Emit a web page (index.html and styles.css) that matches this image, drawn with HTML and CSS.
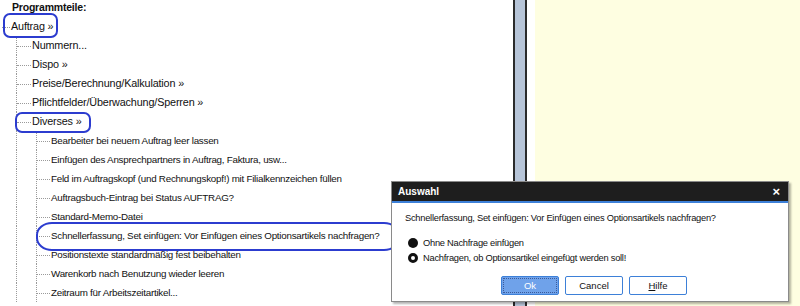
FILE: index.html
```html
<!DOCTYPE html>
<html lang="de">
<head>
  <meta charset="UTF-8">
  <title>Programmteile</title>
  <link rel="stylesheet" href="styles.css">
</head>
<body>
  <div class="window">
    <div class="tree-pane">
      <ul class="tree">
        <li class="head">Programmteile:</li>
        <li class="lvl0">Auftrag »</li>
        <li class="lvl1">Nummern...</li>
        <li class="lvl1">Dispo »</li>
        <li class="lvl1">Preise/Berechnung/Kalkulation »</li>
        <li class="lvl1">Pflichtfelder/Überwachung/Sperren »</li>
        <li class="lvl1">Diverses »</li>
        <li class="lvl2">Bearbeiter bei neuem Auftrag leer lassen</li>
        <li class="lvl2">Einfügen des Ansprechpartners in Auftrag, Faktura, usw...</li>
        <li class="lvl2">Feld im Auftragskopf (und Rechnungskopf!) mit Filialkennzeichen füllen</li>
        <li class="lvl2">Auftragsbuch-Eintrag bei Status AUFTRAG?</li>
        <li class="lvl2">Standard-Memo-Datei</li>
        <li class="lvl2">Schnellerfassung, Set einfügen: Vor Einfügen eines Optionsartikels nachfragen?</li>
        <li class="lvl2">Positionstexte standardmäßig fest beibehalten</li>
        <li class="lvl2">Warenkorb nach Benutzung wieder leeren</li>
        <li class="lvl2">Zeitraum für Arbeitszeitartikel...</li>
      </ul>
      <span class="mark mark-auftrag"></span>
      <span class="mark mark-diverses"></span>
      <span class="mark mark-schnell"></span>
    </div>
    <div class="splitter"></div>
    <div class="memo"></div>
  </div>

  <div class="dialog">
    <div class="dialog-title">
      <span>Auswahl</span>
      <span class="close">×</span>
    </div>
    <div class="dialog-body">
      <p class="question">Schnellerfassung, Set einfügen: Vor Einfügen eines Optionsartikels nachfragen?</p>
      <div class="options">
        <label class="option"><span class="radio filled"></span>Ohne Nachfrage einfügen</label>
        <label class="option"><span class="radio ring"></span>Nachfragen, ob Optionsartikel eingefügt werden soll!</label>
      </div>
      <div class="buttons">
        <button class="btn primary">Ok</button>
        <button class="btn">Cancel</button>
        <button class="btn"><u>H</u>ilfe</button>
      </div>
    </div>
  </div>
</body>
</html>
```

FILE: styles.css
```css
body {
  margin: 0;
  font-family: 'Liberation Sans', Arial, sans-serif;
  color: #111;
  background: #fff;
  overflow: hidden;
}
.window {
  display: flex;
  height: 306px;
}
.tree-pane {
  width: 513px;
  position: relative;
  background: #fff;
}
.tree {
  list-style: none;
  margin: -2px 0 0;
  padding: 0;
}
.tree li {
  height: 19px;
  line-height: 19px;
  white-space: nowrap;
  position: relative;
  font-size: 10.8px;
  letter-spacing: -0.15px;
}
.tree .head {
  padding-left: 12px;
  font-weight: bold;
  font-size: 10.5px;
  letter-spacing: -0.2px;
}
.tree .lvl0 {
  padding-left: 11px;
}
.tree .lvl1 {
  padding-left: 32px;
  background: linear-gradient(#9a9a9a 50%, transparent 50%) 16px 0 / 1px 2px repeat-y;
}
.tree .lvl2 {
  padding-left: 51px;
  font-size: 9.8px;
  letter-spacing: -0.25px;
  background:
    linear-gradient(#9a9a9a 50%, transparent 50%) 16px 0 / 1px 2px repeat-y,
    linear-gradient(#9a9a9a 50%, transparent 50%) 36px 0 / 1px 2px repeat-y;
}
/* horizontal dotted connectors */
.tree .lvl0::before,
.tree .lvl1::before,
.tree .lvl2::before {
  content: "";
  position: absolute;
  top: 10px;
  border-top: 1px dotted #9a9a9a;
}
.tree .lvl0::before { left: 2px; width: 8px; }
.tree .lvl1::before { left: 17px; width: 14px; }
.tree .lvl2::before { left: 37px; width: 13px; }
.mark {
  position: absolute;
  border: 2px solid #2c3ccf;
  box-sizing: border-box;
}
.mark-auftrag {
  left: 3px;
  top: 13px;
  width: 55px;
  height: 25px;
  border-radius: 7px;
}
.mark-diverses {
  left: 15px;
  top: 112px;
  width: 76px;
  height: 21px;
  border-radius: 7px;
}
.mark-schnell {
  left: 36px;
  top: 222px;
  width: 364px;
  height: 29px;
  border-radius: 16px / 13px;
}
.splitter {
  width: 10px;
  background: #b6c4d7;
  border-left: 2px solid #2a2a2a;
  border-right: 2px solid #2a2a2a;
}
.memo {
  flex: 1;
  border-left: 8px solid #fff;
  background: #fefee1;
}
.dialog {
  position: absolute;
  left: 391px;
  top: 181px;
  width: 396px;
  height: 119px;
  background: #fff;
  border: 1px solid #8a8a8a;
  box-shadow: 2px 2px 2px rgba(0,0,0,0.3);
  display: flex;
  flex-direction: column;
}
.dialog-title {
  height: 19px;
  background: #1e1e1e;
  border-bottom: 2px solid #3d80d8;
  color: #fff;
  font-weight: bold;
  font-size: 10px;
  display: flex;
  align-items: center;
  justify-content: space-between;
  padding: 0 8px 0 6px;
}
.dialog-title .close {
  font-size: 13px;
}
.dialog-body {
  padding: 0 0 0 13px;
  font-size: 9.3px;
  letter-spacing: -0.25px;
}
.question {
  margin: 9px 0 0;
  line-height: 12px;
}
.options {
  margin-top: 13px;
  display: flex;
  flex-direction: column;
  gap: 4px;
}
.option {
  display: flex;
  align-items: center;
  height: 11px;
  gap: 5px;
}
.radio {
  width: 10px;
  height: 10px;
  border-radius: 50%;
  box-sizing: border-box;
  margin-left: 3px;
}
.radio.filled {
  background: #111;
}
.radio.ring {
  border: 3px solid #111;
  background: #fff;
}
.buttons {
  margin: 13px 0 0 96px;
  display: flex;
  gap: 6px;
}
.btn {
  width: 58px;
  height: 19px;
  border: 1px solid #3d80d8;
  border-radius: 2px;
  background: #fff;
  font-family: inherit;
  font-size: 9.5px;
  color: #111;
  padding: 0;
}
.btn.primary {
  background: #6fa2ea;
  color: #fff;
  outline: 1px dotted #3a5a9a;
  outline-offset: -3px;
}
```
